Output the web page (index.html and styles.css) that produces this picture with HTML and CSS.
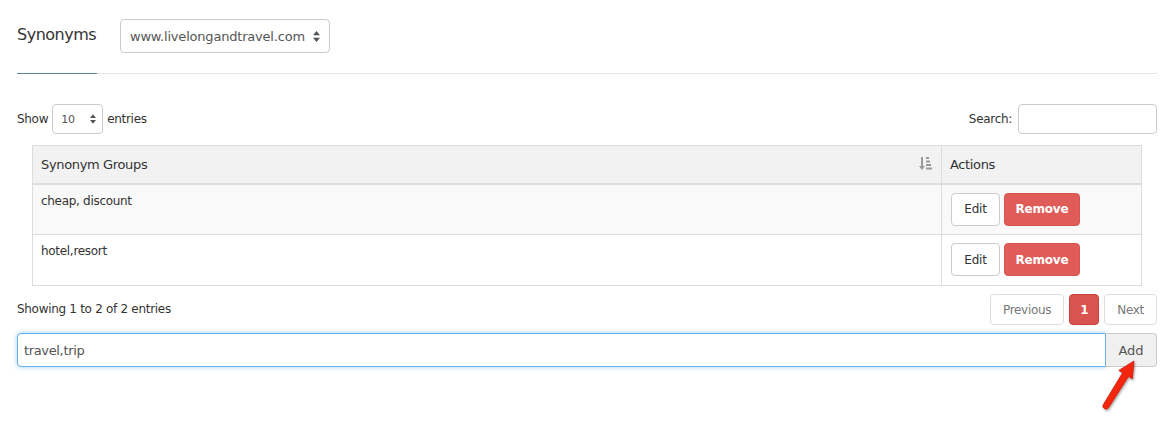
FILE: index.html
```html
<!DOCTYPE html>
<html lang="en">
<head>
  <meta charset="UTF-8">
  <title>Synonyms</title>
  <link rel="stylesheet" href="styles.css">
</head>
<body>
  <div class="page">
    <div class="page-header">
      <div class="tab-title">Synonyms</div>
      <div class="site-select">
        <span>www.livelongandtravel.com</span>
        <svg class="updown" width="7" height="11" viewBox="0 0 7 11"><path d="M3.5 0L7 4.2H0z M3.5 11L0 6.8h7z" fill="#555"/></svg>
      </div>
    </div>
    <div class="header-rule"><span class="active"></span></div>

    <div class="table-top">
      <div class="length">
        Show
        <div class="length-select">
          <span>10</span>
          <svg class="updown" width="6" height="10" viewBox="0 0 7 11"><path d="M3.5 0L7 4.2H0z M3.5 11L0 6.8h7z" fill="#555"/></svg>
        </div>
        entries
      </div>
      <div class="search">
        Search:
        <input type="text" class="search-box">
      </div>
    </div>

    <table class="synonyms">
      <thead>
        <tr>
          <th class="col-group">
            Synonym Groups
            <svg class="sort" width="13" height="13" viewBox="0 0 13 13">
              <path d="M2 0h2v9h2L3 13 0 9h2z" fill="#999"/>
              <rect x="7" y="0" width="3" height="2" fill="#999"/>
              <rect x="7" y="3.5" width="4" height="2" fill="#999"/>
              <rect x="7" y="7" width="5" height="2" fill="#999"/>
              <rect x="7" y="10.5" width="6" height="2" fill="#999"/>
            </svg>
          </th>
          <th class="col-actions">Actions</th>
        </tr>
      </thead>
      <tbody>
        <tr class="odd">
          <td>cheap, discount</td>
          <td class="actions"><button class="btn">Edit</button><button class="btn btn-danger">Remove</button></td>
        </tr>
        <tr>
          <td>hotel,resort</td>
          <td class="actions"><button class="btn">Edit</button><button class="btn btn-danger">Remove</button></td>
        </tr>
      </tbody>
    </table>

    <div class="table-bottom">
      <div class="info">Showing 1 to 2 of 2 entries</div>
      <div class="paging">
        <span class="page-btn">Previous</span>
        <span class="page-btn current">1</span>
        <span class="page-btn">Next</span>
      </div>
    </div>

    <div class="add-group">
      <input type="text" class="add-input" value="travel,trip">
      <button class="add-btn">Add</button>
      <!-- callout arrow pointing at the Add button -->
      <svg class="arrow" width="50" height="60" viewBox="0 0 50 60">
        <defs>
          <filter id="shadow" x="-30%" y="-30%" width="160%" height="160%">
            <feDropShadow dx="1" dy="1.5" stdDeviation="1.2" flood-color="#000" flood-opacity="0.35"/>
          </filter>
        </defs>
        <path d="M37 5 L35.4 22.8 L31.5 20.5 L11.6 51.6 A3 3 0 0 1 6.4 48.4 L25.6 16.8 L21.8 14.4 Z"
              fill="#f4260f" stroke="#c81a08" stroke-width="0.8" stroke-linejoin="round" filter="url(#shadow)"/>
      </svg>
    </div>
  </div>
</body>
</html>
```

FILE: styles.css
```css
* {
  margin: 0;
  padding: 0;
  box-sizing: border-box;
}

html,
body {
  min-height: 100vh;
}

body {
  font-family: "DejaVu Sans", Verdana, sans-serif;
  font-size: 12px;
  color: #333;
  background: #fff;
}

.page {
  padding: 19px 10px 0 17px;
}

.page-header {
  display: flex;
  align-items: center;
  gap: 25px;
  height: 34px;
}

.tab-title {
  font-size: 16px;
  letter-spacing: -0.5px;
  color: #333;
  width: 78px;
  margin-top: -3px;
}

.site-select {
  display: flex;
  align-items: center;
  justify-content: space-between;
  width: 210px;
  height: 34px;
  padding: 0 9px 0 9px;
  border: 1px solid #ccc;
  border-radius: 4px;
  font-size: 13px;
  letter-spacing: -0.2px;
  color: #555;
}

.header-rule {
  margin-top: 20px;
  height: 1px;
  background: #e5e5e5;
}

.header-rule .active {
  display: block;
  width: 80px;
  height: 1px;
  background: #5a7ea6;
}

.table-top {
  display: flex;
  justify-content: space-between;
  align-items: center;
  margin-top: 30px;
  height: 30px;
}

.length,
.search {
  display: flex;
  align-items: center;
  gap: 4px;
  letter-spacing: -0.3px;
}

.length-select {
  display: flex;
  align-items: center;
  justify-content: space-between;
  width: 51px;
  height: 30px;
  padding: 0 6px 0 8px;
  border: 1px solid #ccc;
  border-radius: 4px;
  font-size: 11px;
  color: #555;
}

.search {
  gap: 6px;
}

.search-box {
  width: 139px;
  height: 30px;
  border: 1px solid #ccc;
  border-radius: 4px;
}

.synonyms {
  margin: 11px 15px 0 15px;
  width: 1110px;
  border-collapse: collapse;
  border: 1px solid #ddd;
}

.synonyms th {
  background: #f2f2f2;
  height: 38px;
  font-size: 13px;
  font-weight: normal;
  text-align: left;
  letter-spacing: -0.35px;
  padding: 0 8px;
  border-left: 1px solid #ddd;
  border-bottom: 2px solid #ddd;
  color: #333;
}

.synonyms .col-group {
  position: relative;
}

.sort {
  position: absolute;
  right: 9px;
  top: 11px;
}

.synonyms .col-actions {
  width: 200px;
}

.synonyms td {
  height: 51px;
  padding: 9px 8px;
  vertical-align: top;
  border-left: 1px solid #ddd;
  border-bottom: 1px solid #ddd;
  letter-spacing: -0.3px;
}

.synonyms tr.odd td {
  background: #f9f9f9;
}

.synonyms td.actions {
  padding: 8px 8px 8px 9px;
}

.btn {
  font-family: inherit;
  font-size: 12px;
  letter-spacing: -0.2px;
  width: 49px;
  height: 33px;
  border: 1px solid #ccc;
  border-radius: 4px;
  background: #fff;
  color: #333;
  margin-right: 4px;
  cursor: pointer;
}

.btn-danger {
  background: #e05c58;
  border-color: #d9534f;
  color: #fff;
  font-weight: bold;
  width: 76px;
}

.table-bottom {
  display: flex;
  justify-content: space-between;
  align-items: center;
  margin-top: 8px;
  height: 31px;
}

.info {
  letter-spacing: -0.3px;
  margin-top: -2px;
}

.paging {
  display: flex;
  gap: 5px;
}

.page-btn {
  display: flex;
  align-items: center;
  justify-content: center;
  height: 31px;
  padding: 0 12px;
  border: 1px solid #ddd;
  border-radius: 4px;
  color: #777;
  letter-spacing: -0.3px;
}

.page-btn.current {
  width: 30px;
  padding: 0;
  background: #d9534f;
  border-color: #c9403c;
  color: #fff;
  font-weight: bold;
}

.add-group {
  position: relative;
  display: flex;
  margin-top: 8px;
  height: 34px;
}

.add-input {
  flex: 1;
  height: 34px;
  padding: 0 6px;
  font-family: inherit;
  font-size: 13px;
  letter-spacing: -0.35px;
  color: #555;
  border: 1px solid #66afe9;
  border-radius: 4px 0 0 4px;
  box-shadow: 0 0 5px rgba(102, 175, 233, 0.6);
  outline: none;
}

.add-btn {
  width: 51px;
  height: 34px;
  font-family: inherit;
  font-size: 13px;
  color: #555;
  background: #f0f0f0;
  border: 1px solid #ccc;
  border-left: none;
  border-radius: 0 4px 4px 0;
}

.arrow {
  position: absolute;
  right: 10px;
  top: 23px;
}
```
